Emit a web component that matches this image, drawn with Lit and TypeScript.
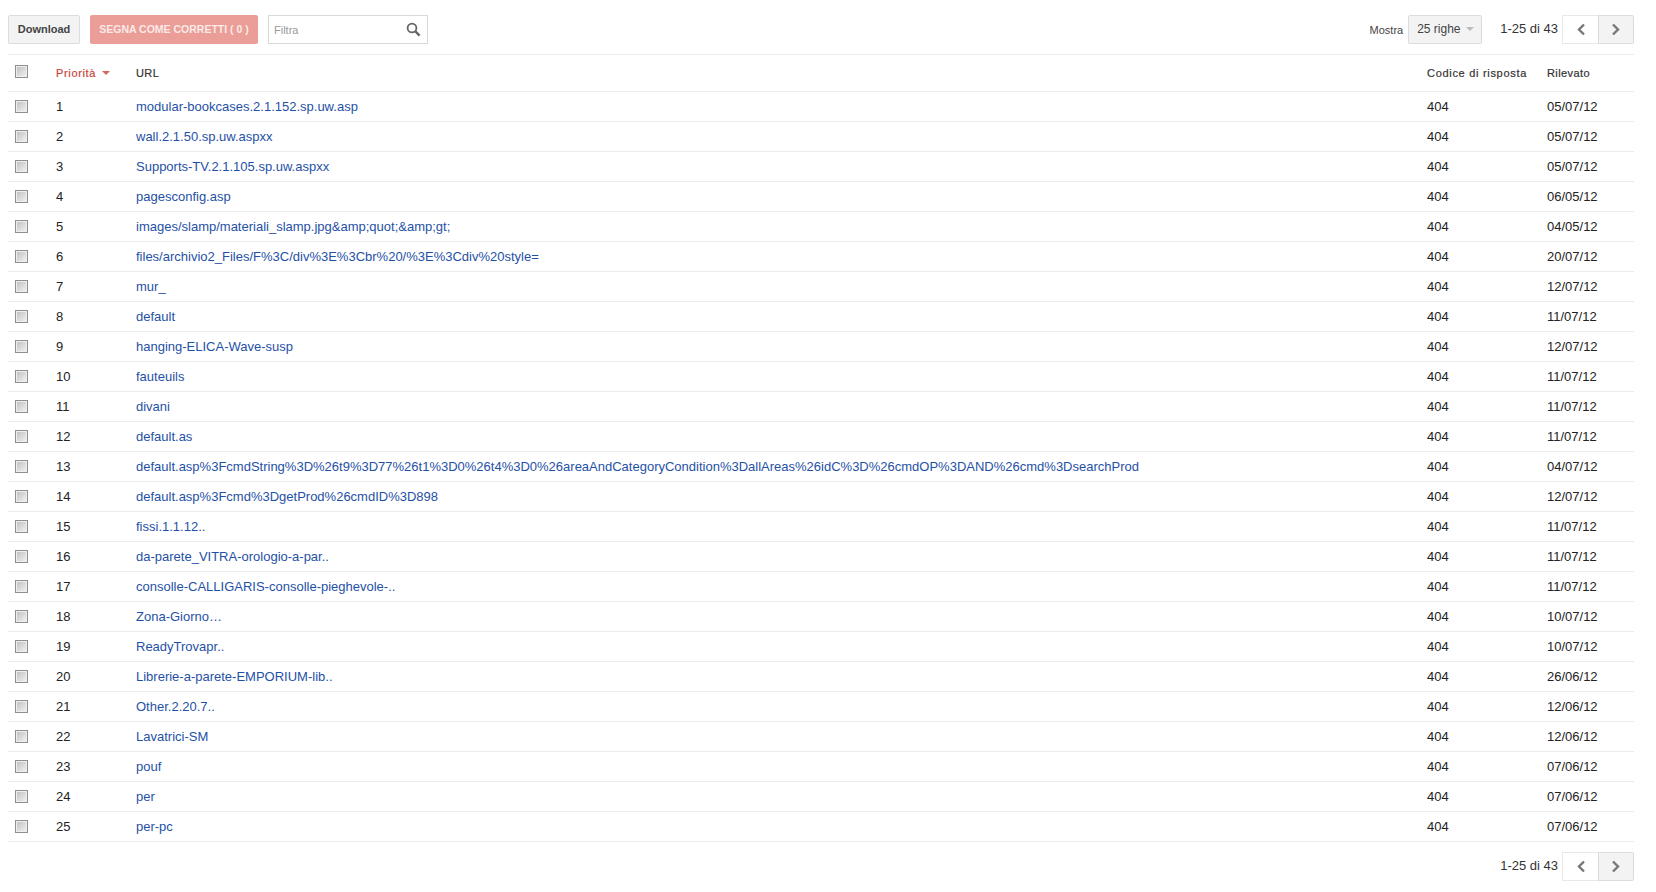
import { LitElement, css, html } from 'lit';
import { customElement } from 'lit/decorators.js';

const ROWS: [string, string][] = [
	['modular-bookcases.2.1.152.sp.uw.asp', '05/07/12'],
	['wall.2.1.50.sp.uw.aspxx', '05/07/12'],
	['Supports-TV.2.1.105.sp.uw.aspxx', '05/07/12'],
	['pagesconfig.asp', '06/05/12'],
	['images/slamp/materiali_slamp.jpg&amp;quot;&amp;gt;', '04/05/12'],
	['files/archivio2_Files/F%3C/div%3E%3Cbr%20/%3E%3Cdiv%20style=', '20/07/12'],
	['mur_', '12/07/12'],
	['default', '11/07/12'],
	['hanging-ELICA-Wave-susp', '12/07/12'],
	['fauteuils', '11/07/12'],
	['divani', '11/07/12'],
	['default.as', '11/07/12'],
	['default.asp%3FcmdString%3D%26t9%3D77%26t1%3D0%26t4%3D0%26areaAndCategoryCondition%3DallAreas%26idC%3D%26cmdOP%3DAND%26cmd%3DsearchProd', '04/07/12'],
	['default.asp%3Fcmd%3DgetProd%26cmdID%3D898', '12/07/12'],
	['fissi.1.1.12..', '11/07/12'],
	['da-parete_VITRA-orologio-a-par..', '11/07/12'],
	['consolle-CALLIGARIS-consolle-pieghevole-..', '11/07/12'],
	['Zona-Giorno…', '10/07/12'],
	['ReadyTrovapr..', '10/07/12'],
	['Librerie-a-parete-EMPORIUM-lib..', '26/06/12'],
	['Other.2.20.7..', '12/06/12'],
	['Lavatrici-SM', '12/06/12'],
	['pouf', '07/06/12'],
	['per', '07/06/12'],
	['per-pc', '07/06/12'],
];

@customElement('app-root')
export class AppRoot extends LitElement {
	static styles = css`
		:host {
			display: block;
			height: 892px;
			padding: 15px 22px 0 8px;
			box-sizing: border-box;
			background: #fff;
			color: #222;
			font-family: 'Liberation Sans', Arial, sans-serif;
			font-size: 13px;
		}
		.toolbar,
		.pager {
			display: flex;
			align-items: center;
			height: 29px;
		}
		.toolbar {
			padding-bottom: 10px;
			border-bottom: 1px solid #ebebeb;
		}
		.btn {
			height: 29px;
			box-sizing: border-box;
			display: flex;
			align-items: center;
			justify-content: center;
			padding-bottom: 2px;
			border-radius: 2px;
			font-size: 11px;
			font-weight: 700;
		}
		.download {
			width: 72px;
			border: 1px solid #dcdcdc;
			background: #f3f3f3;
			color: #444;
		}
		.mark {
			width: 168px;
			margin-left: 10px;
			background: #ea9e97;
			color: #fbe9e7;
			font-size: 10.5px;
			white-space: nowrap;
		}
		.filter {
			width: 160px;
			height: 29px;
			box-sizing: border-box;
			margin-left: 10px;
			padding: 0 6px 0 5px;
			border: 1px solid #d9d9d9;
			display: flex;
			align-items: center;
			justify-content: space-between;
			color: #999;
			font-size: 11px;
		}
		.spacer {
			flex: 1;
		}
		.show {
			font-size: 11px;
			color: #444;
			margin-right: 5px;
		}
		.select {
			width: 74px;
			justify-content: flex-start;
			gap: 5px;
			padding-left: 8px;
			border: 1px solid #dcdcdc;
			background: #f3f3f3;
			color: #444;
			font-size: 12px;
			font-weight: 400;
		}
		.caret {
			width: 0;
			height: 0;
			border: 4px solid transparent;
			border-bottom-width: 0;
			border-top-color: #bbb;
		}
		.select .caret {
			margin-top: 1px;
		}
		.range {
			margin: 0 4px 0 18px;
			font-size: 13px;
			line-height: 28px;
			align-self: flex-start;
			color: #333;
		}
		.nav {
			width: 37px;
			height: 29px;
			box-sizing: border-box;
			display: flex;
			align-items: center;
			justify-content: center;
			border: 1px solid #e8e8e8;
			background: #fff;
		}
		.nav + .nav {
			width: 36px;
			margin-left: -1px;
			border-color: #dcdcdc;
			background: #f3f3f3;
			border-radius: 0 2px 2px 0;
		}
		.row {
			display: grid;
			grid-template-columns: 48px 80px 1fr 120px 87px;
			align-items: center;
			height: 30px;
			box-sizing: border-box;
			border-bottom: 1px solid #ebebeb;
		}
		.row.head {
			height: 37px;
			font-size: 11px;
			letter-spacing: 0.4px;
			color: #333;
			-webkit-text-stroke: 0.2px #333;
		}
		.row.head .code {
			letter-spacing: 0.7px;
		}
		.box {
			width: 13px;
			height: 13px;
			margin-left: 7px;
			box-sizing: border-box;
			border: 1px solid #8f8f8f;
			background: linear-gradient(135deg, #bdbdbd, #f4f4f4);
			box-shadow: inset 0 0 0 1px #eee;
		}
		.head .box {
			margin-top: -3px;
		}
		.sorted {
			display: flex;
			align-items: center;
			gap: 6px;
			letter-spacing: 0.65px;
			color: #c9443a;
			-webkit-text-stroke: 0.2px #c9443a;
		}
		.sorted .caret {
			border-top-color: #d3685f;
		}
		.url {
			color: #1f51a6;
			white-space: nowrap;
		}
		.pager {
			justify-content: flex-end;
			margin-top: 10px;
		}
	`;

	private chevron(left: boolean) {
		const d = left ? 'M10 2.5 L5 7.5 L10 12.5' : 'M3 2.5 L8 7.5 L3 12.5';
		return html`<svg width="13" height="15" viewBox="0 0 13 15">
			<path d=${d} fill="none" stroke="#777" stroke-width="2.4" />
		</svg>`;
	}

	private nav() {
		return html`<span class="range">1-25 di 43</span>
			<div class="nav">${this.chevron(true)}</div>
			<div class="nav">${this.chevron(false)}</div>`;
	}

	render() {
		return html`
			<div class="toolbar">
				<div class="btn download">Download</div>
				<div class="btn mark">SEGNA COME CORRETTI ( 0 )</div>
				<div class="filter">
					<span>Filtra</span>
					<svg width="15" height="15" viewBox="0 0 15 15">
						<circle cx="6" cy="6" r="4.4" fill="none" stroke="#666" stroke-width="1.8" />
						<path d="M9.4 9.4 L13.6 13.6" stroke="#666" stroke-width="2.4" />
					</svg>
				</div>
				<div class="spacer"></div>
				<span class="show">Mostra</span>
				<div class="btn select">25 righe <span class="caret"></span></div>
				${this.nav()}
			</div>
			<div class="row head">
				<div class="box"></div>
				<div class="sorted">Priorità <span class="caret"></span></div>
				<div>URL</div>
				<div class="code">Codice di risposta</div>
				<div>Rilevato</div>
			</div>
			${ROWS.map(
				([url, date], i) => html`<div class="row">
					<div class="box"></div>
					<div>${i + 1}</div>
					<div class="url">${url}</div>
					<div>404</div>
					<div>${date}</div>
				</div>`,
			)}
			<div class="pager">${this.nav()}</div>
		`;
	}
}
